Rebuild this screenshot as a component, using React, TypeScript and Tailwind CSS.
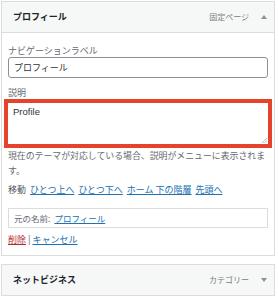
const jp = { fontFamily: '"Noto Sans CJK JP", "Noto Sans", sans-serif' };

function Caret({ up }: { up?: boolean }) {
  return (
    <svg width="6" height="4" viewBox="0 0 6 4" className="ml-[12px]">
      <path d={up ? 'M0 4 L3 0 L6 4 Z' : 'M0 0 L6 0 L3 4 Z'} fill="#8c8f94" />
    </svg>
  );
}

function PanelHeader({ title, type, open }: { title: string; type: string; open?: boolean }) {
  return (
    <div className="flex h-[30px] items-center justify-between bg-[#f6f7f7] pl-[11px] pr-[7px]">
      <span className="text-[9px] font-bold text-[#1d2327]">{title}</span>
      <span className="flex items-center text-[8px] text-[#787c82]">
        {type}
        <Caret up={open} />
      </span>
    </div>
  );
}

export default function App() {
  return (
    <div className="h-[300px] w-[278px] overflow-hidden bg-white pl-px pt-px" style={jp}>
      <div className="w-[274px] border border-[#dcdcde]">
        <div className="border-b border-[#dcdcde]">
          <PanelHeader title="プロフィール" type="固定ページ" open />
        </div>
        <div className="px-[6px] pb-[9px] pt-[11px] text-[9px]">
          <div className="leading-[13px] text-[#646970]">ナビゲーションラベル</div>
          <div className="flex h-[21px] items-center rounded-[3px] border border-[#8c8f94] pl-[5px] text-[9px] text-[#2c3338]">
            プロフィール
          </div>

          <div className="mt-[9px] leading-[12px] text-[#646970]">説明</div>
          <div className="relative -mx-[4px] h-[49px] border-[4px] border-[#e6432d] bg-white pl-[5px] pt-[2px]">
            <span
              className="text-[9.5px] leading-[13px] text-[#2c3338]"
              style={{ fontFamily: '"Liberation Sans", Arial, sans-serif' }}
            >
              Profile
            </span>
            <svg width="5" height="5" viewBox="0 0 5 5" className="absolute bottom-[1px] right-[1px]">
              <path d="M0 5 L5 0 M2.5 5 L5 2.5" stroke="#a7aaad" strokeWidth="0.8" />
            </svg>
          </div>
          <p className="whitespace-nowrap text-[8.9px] leading-[15px] text-[#646970]">
            現在のテーマが対応している場合、説明がメニューに表示されま
            <br />
            す。
          </p>

          <div className="mt-[5px] flex items-center gap-[4px] leading-[13px]">
            <span className="text-[#50575e]">移動</span>
            {['ひとつ上へ', 'ひとつ下へ', 'ホーム 下の階層', '先頭へ'].map((t) => (
              <a key={t} href="#" className="text-[#2271b1] underline">
                {t}
              </a>
            ))}
          </div>

          <div className="mt-[12px] flex h-[20px] items-center border border-[#dcdcde] pl-[5px] text-[8.5px]">
            <span className="text-[#646970]">元の名前:</span>
            <a href="#" className="ml-[4px] text-[#2271b1] underline">
              プロフィール
            </a>
          </div>

          <div className="mt-[5px] flex items-center leading-[13px]">
            <a href="#" className="text-[#b32d2e] underline">
              削除
            </a>
            <span className="mx-[2px] text-[#50575e]">|</span>
            <a href="#" className="text-[#2271b1] underline">
              キャンセル
            </a>
          </div>
        </div>
      </div>

      <div className="mt-[8px] w-[274px] border border-[#dcdcde]">
        <PanelHeader title="ネットビジネス" type="カテゴリー" />
      </div>
    </div>
  );
}
